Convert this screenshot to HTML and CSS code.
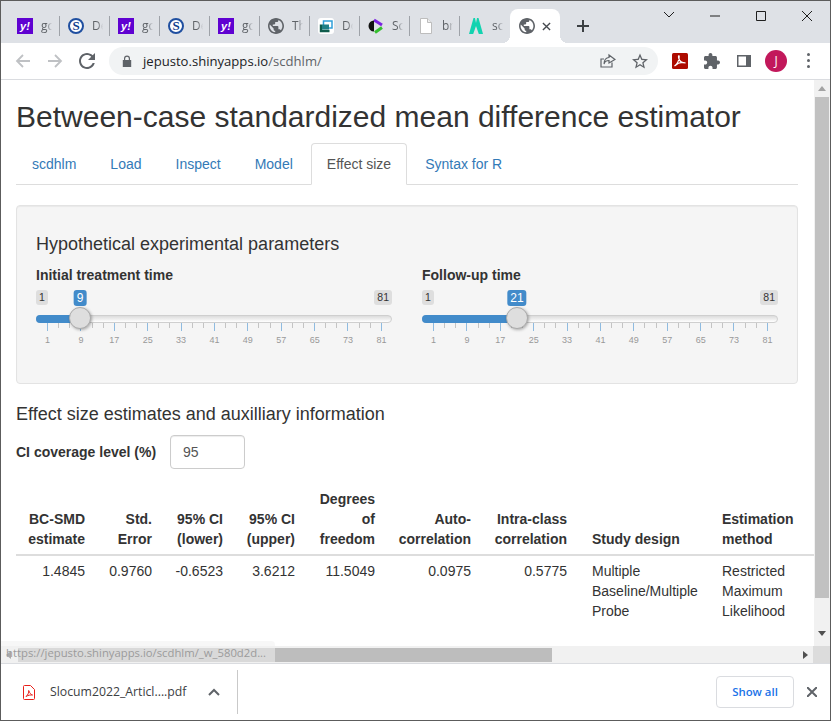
FILE: index.html
```html
<!DOCTYPE html>
<html lang="en">
<head>
<meta charset="utf-8">
<title>scdhlm</title>
<link rel="stylesheet" href="styles.css">
</head>
<body>
<svg class="defs" width="0" height="0" aria-hidden="true">
  <symbol id="globe" viewBox="2 2 20 20"><path d="M12 2C6.48 2 2 6.48 2 12s4.48 10 10 10 10-4.48 10-10S17.52 2 12 2zm-1 17.93c-3.95-.49-7-3.85-7-7.93 0-.62.08-1.21.21-1.79L9 15v1c0 1.1.9 2 2 2v1.93zm6.9-2.54c-.26-.81-1-1.39-1.9-1.39h-1v-3c0-.55-.45-1-1-1H8v-2h2c.55 0 1-.45 1-1V7h2c1.1 0 2-.9 2-2v-.41c2.93 1.19 5 4.06 5 7.41 0 2.08-.8 3.97-2.1 5.39z"/></symbol>
</svg>
<div class="window">
  <header class="strip">
    <div class="tab first"><span class="fav yahoo">y!</span><span class="title">gc</span></div>
    <div class="tab"><span class="fav sch">S</span><span class="title">De</span></div>
    <div class="tab"><span class="fav yahoo">y!</span><span class="title">gc</span></div>
    <div class="tab"><span class="fav sch">S</span><span class="title">De</span></div>
    <div class="tab"><span class="fav yahoo">y!</span><span class="title">gc</span></div>
    <div class="tab"><svg class="fav globe"><use href="#globe"/></svg><span class="title">Th</span></div>
    <div class="tab"><svg class="fav" viewBox="0 0 16 16"><rect width="16" height="16" rx="3" fill="#fff"/><rect x="5.500" y="3" width="8.500" height="7" fill="none" stroke="#2f9ed8" stroke-width="1.500"/><path d="M3 6.500V13h8.500" fill="none" stroke="#0f5c4c" stroke-width="2.400"/><path d="M4 11.500h7V6.500H4z" fill="#1f7f86"/></svg><span class="title">Do</span></div>
    <div class="tab"><svg class="fav" viewBox="0 0 16 16"><path d="M6 2 14 7" fill="none" stroke="#7a22e0" stroke-width="3"/><path d="M14 9.500 7 14.500" fill="none" stroke="#35c02f" stroke-width="3"/><path d="M6 2.500a5.500 5.500 0 0 0 0 11z" fill="#111"/></svg><span class="title">Sc</span></div>
    <div class="tab"><svg class="fav" viewBox="0 0 16 16"><path d="M2.500 .5h7l4 4v11h-11z" fill="#fff" stroke="#bdbdbd"/><path d="M9.500 .5v4h4" fill="#eee" stroke="#bdbdbd"/></svg><span class="title">br</span></div>
    <div class="tab last"><svg class="fav" viewBox="0 0 16 16"><path d="M5.500 0h1.500l1 5 1-5h1.500L15 16h-4.200L8 8 5.200 16H1z" fill="#12d3b0"/></svg><span class="title">sc</span></div>
    <div class="tab active"><svg class="fav globe"><use href="#globe"/></svg><svg class="tab-x" viewBox="0 0 10 10"><path d="M1 1l8 8M9 1l-8 8"/></svg></div>
    <svg class="plus" viewBox="0 0 12 12"><path d="M6 0v12M0 6h12"/></svg>
    <div class="winctl">
      <svg class="wc" viewBox="0 0 46 30"><path d="M18 11l5 5 5-5"/></svg>
      <svg class="wc" viewBox="0 0 46 30"><path d="M18 15h10"/></svg>
      <svg class="wc" viewBox="0 0 46 30"><path d="M18.500 10.500h9v9h-9z"/></svg>
      <svg class="wc" viewBox="0 0 46 30"><path d="M18 10l10 10M28 10L18 20"/></svg>
    </div>
  </header>

  <nav class="toolbar">
    <span class="tbtn"><svg class="ico line off" viewBox="0 0 16 16"><path d="M15 8H2M8 2 2 8l6 6"/></svg></span>
    <span class="tbtn"><svg class="ico line off" viewBox="0 0 16 16"><path d="M1 8h13M8 2l6 6-6 6"/></svg></span>
    <span class="tbtn"><svg class="ico solid" viewBox="4 4 16 16"><path d="M17.650 6.350C16.200 4.900 14.210 4 12 4c-4.420 0-7.990 3.580-7.990 8s3.570 8 7.990 8c3.730 0 6.840-2.550 7.730-6h-2.080c-.82 2.330-3.040 4-5.650 4-3.310 0-6-2.690-6-6s2.690-6 6-6c1.660 0 3.140.69 4.220 1.780L13 11h7V4l-2.350 2.350z"/></svg></span>
    <div class="omni">
      <svg class="lock" viewBox="0 0 10 12"><path d="M2 5V3.500a3 3 0 0 1 6 0V5h1.200v7H.8V5zm1.200 0h3.600V3.500a1.800 1.800 0 0 0-3.600 0z"/></svg>
      <span class="url"><span class="host">jepusto.shinyapps.io</span>/scdhlm/</span>
      <svg class="ico line share" viewBox="0 0 16 16"><path d="M12 9.500V14H1V6h3M9 2l6 4.500L9 10V7.500C6 7.500 4.500 9 4 11c0-4 2-6.500 5-6.500z"/></svg>
      <svg class="ico solid star" viewBox="2 2 20 19"><path d="M22 9.240l-7.190-.62L12 2 9.190 8.630 2 9.240l5.460 4.730L5.820 21 12 17.270 18.180 21l-1.630-7.030L22 9.240zM12 15.400l-3.760 2.270 1-4.280-3.320-2.880 4.380-.38L12 6.100l1.710 4.040 4.380.38-3.320 2.880 1 4.280L12 15.400z"/></svg>
    </div>
    <span class="tbtn"><svg class="acro" viewBox="0 0 16 16"><rect width="16" height="16" rx="1.500" fill="#ad0b00"/><path d="M2.500 13C5 11.500 7.500 7 7.200 3c-.7-.5-1 .5-.4 2.500C7.500 8 9.500 10 13.500 10c-3-1.200-7-.5-11 3z" fill="none" stroke="#fff" stroke-width="1.200"/></svg></span>
    <span class="tbtn"><svg class="ico solid" viewBox="2 1 21 21"><path d="M20.500 11H19V7c0-1.100-.9-2-2-2h-4V3.500C13 2.120 11.880 1 10.500 1S8 2.120 8 3.500V5H4c-1.100 0-1.990.9-1.990 2v3.800H3.500c1.490 0 2.700 1.210 2.700 2.700s-1.210 2.700-2.700 2.700H2V20c0 1.100.9 2 2 2h3.800v-1.500c0-1.490 1.210-2.700 2.700-2.700 1.490 0 2.700 1.210 2.700 2.700V22H17c1.100 0 2-.9 2-2v-4h1.500c1.380 0 2.500-1.120 2.500-2.500S21.880 11 20.500 11z"/></svg></span>
    <span class="tbtn"><svg class="panel" viewBox="0 0 14 12"><path d="M0 0h14v12H0zM1.500 1.500v9H9v-9z" fill-rule="evenodd"/></svg></span>
    <span class="tbtn"><span class="avatar">J</span></span>
    <span class="tbtn"><span class="dots"><i></i><i></i><i></i></span></span>
  </nav>

  <div class="view">
    <div class="view-row">
      <main class="page">
        <h1>Between-case standardized mean difference estimator</h1>
        <ul class="nav-tabs">
          <li><a>scdhlm</a></li>
          <li><a>Load</a></li>
          <li><a>Inspect</a></li>
          <li><a>Model</a></li>
          <li class="on"><a>Effect size</a></li>
          <li><a>Syntax for R</a></li>
        </ul>
        <section class="well">
          <h4>Hypothetical experimental parameters</h4>
          <div class="sliders">
            <div class="slider-col">
              <label class="lbl">Initial treatment time</label>
              <div class="irs">
                <div class="bubbles"><span class="minmax">1</span><span class="from" style="left:44px">9</span><span class="minmax">81</span></div>
                <div class="bar"><div class="bar-fill" style="width:44px"></div><span class="handle" style="left:43px"></span></div>
                <div class="ticks"><i class="maj"></i><i></i><i></i><i class="maj"></i><i></i><i></i><i class="maj"></i><i></i><i></i><i class="maj"></i><i></i><i></i><i class="maj"></i><i></i><i></i><i class="maj"></i><i></i><i></i><i class="maj"></i><i></i><i></i><i class="maj"></i><i></i><i></i><i class="maj"></i><i></i><i></i><i class="maj"></i><i></i><i></i><i class="maj"></i></div>
                <div class="grid"><b>1</b><b>9</b><b>17</b><b>25</b><b>33</b><b>41</b><b>49</b><b>57</b><b>65</b><b>73</b><b>81</b></div>
              </div>
            </div>
            <div class="slider-col">
              <label class="lbl">Follow-up time</label>
              <div class="irs">
                <div class="bubbles"><span class="minmax">1</span><span class="from" style="left:95px">21</span><span class="minmax">81</span></div>
                <div class="bar"><div class="bar-fill" style="width:90px"></div><span class="handle" style="left:94px"></span></div>
                <div class="ticks"><i class="maj"></i><i></i><i></i><i class="maj"></i><i></i><i></i><i class="maj"></i><i></i><i></i><i class="maj"></i><i></i><i></i><i class="maj"></i><i></i><i></i><i class="maj"></i><i></i><i></i><i class="maj"></i><i></i><i></i><i class="maj"></i><i></i><i></i><i class="maj"></i><i></i><i></i><i class="maj"></i><i></i><i></i><i class="maj"></i></div>
                <div class="grid"><b>1</b><b>9</b><b>17</b><b>25</b><b>33</b><b>41</b><b>49</b><b>57</b><b>65</b><b>73</b><b>81</b></div>
              </div>
            </div>
          </div>
        </section>
        <h4 class="sub">Effect size estimates and auxilliary information</h4>
        <div class="ci"><label class="lbl">CI coverage level (%)</label><span class="input">95</span></div>
        <table class="res">
          <colgroup><col class="c1"><col class="c2"><col class="c3"><col class="c4"><col class="c5"><col class="c6"><col class="c7"><col class="c8"><col class="c9"></colgroup>
          <thead>
            <tr><th>BC-SMD estimate</th><th>Std. Error</th><th>95% CI (lower)</th><th>95% CI (upper)</th><th>Degrees of freedom</th><th>Auto-correlation</th><th>Intra-class correlation</th><th class="l study">Study design</th><th class="l">Estimation method</th></tr>
          </thead>
          <tbody>
            <tr><td>1.4845</td><td>0.9760</td><td>-0.6523</td><td>3.6212</td><td>11.5049</td><td>0.0975</td><td>0.5775</td><td class="l study">Multiple Baseline/Multiple Probe</td><td class="l">Restricted Maximum Likelihood</td></tr>
          </tbody>
        </table>
      </main>
      <aside class="vscroll"><i class="up"></i><div class="vthumb"></div><i class="down"></i></aside>
    </div>
    <div class="hscroll"><i class="left"></i><div class="htrack"><div class="hthumb"></div></div><i class="right"></i><span class="corner"></span></div>
    <div class="status">https://jepusto.shinyapps.io/scdhlm/_w_580d2d...</div>
  </div>

  <footer class="dl">
    <div class="dl-item">
      <svg class="pdf" viewBox="0 0 12 15"><path d="M1.500.5h6l4 4v9a1 1 0 0 1-1 1h-9a1 1 0 0 1-1-1v-12a1 1 0 0 1 1-1z" fill="#fff" stroke="#e8201a"/><path d="M3 11.500C5 10 6 7.500 5.700 5.500c1 3 2.500 4 3.800 4.500-2-.2-4.500.2-6.500 1.500z" fill="none" stroke="#e8201a"/></svg>
      <span class="fname">Slocum2022_Articl....pdf</span>
      <svg class="chev" viewBox="0 0 12 8"><path d="M1 7l5-5 5 5"/></svg>
    </div>
    <button class="showall">Show all</button>
    <svg class="dl-x" viewBox="0 0 10 10"><path d="M0 0l10 10M10 0L0 10"/></svg>
  </footer>
</div>
</body>
</html>
```
FILE: styles.css
```css
* { box-sizing: border-box; }
html, body { margin: 0; padding: 0; }
body { width: 831px; height: 721px; overflow: hidden; font-family: "Liberation Sans", Arial, sans-serif; font-size: 14px; line-height: 20px; color: #333; background: #fff; }
.defs { position: absolute; }
.window { width: 831px; height: 721px; border: 1px solid #5c5c5c; display: flex; flex-direction: column; overflow: hidden; }

/* tab strip */
.strip { height: 42px; flex: none; background: #dee1e6; display: flex; align-items: flex-end; padding-left: 9px; }
.tab { width: 50px; height: 34px; display: flex; align-items: center; padding-left: 8px; position: relative; flex: none; }
.tab.first { padding-left: 7px; }
.tab::after { content: ""; position: absolute; right: 0; top: 7px; width: 1px; height: 20px; background: #9ea2a8; }
.tab.last::after { display: none; }
.tab.active { background: #fff; border-radius: 8px 8px 0 0; padding-left: 9px; }
.tab.active::before, .tab.active::after { content: ""; position: absolute; bottom: 0; top: auto; width: 8px; height: 8px; }
.tab.active::before { left: -8px; background: radial-gradient(circle at 0 0, transparent 8px, #fff 8px); }
.tab.active::after { right: -8px; background: radial-gradient(circle at 100% 0, transparent 8px, #fff 8px); }
.fav { width: 16px; height: 16px; flex: none; display: block; }
.globe { fill: #5f6368; }
.yahoo { background: #5f01d1; color: #fff; font: italic 700 11px/16px "Liberation Sans", sans-serif; text-align: center; }
.sch { background: #fff; color: #0f3c8c; font: 700 13px/12px "Liberation Serif", serif; text-align: center; border: 2px solid #1f4fa0; border-radius: 50%; }
.title { margin-left: 8px; width: 11px; overflow: hidden; white-space: nowrap; font: 12px/16px "Open Sans", sans-serif; color: #5f6368; -webkit-mask-image: linear-gradient(90deg, #000 50%, transparent); mask-image: linear-gradient(90deg, #000 50%, transparent); }
.tab-x { width: 9px; height: 9px; margin-left: 7px; fill: none; stroke: #45494e; stroke-width: 1.500; }
.plus { width: 12px; height: 12px; margin: 0 0 11px 17px; flex: none; fill: none; stroke: #3c4043; stroke-width: 2; }
.winctl { margin-left: auto; align-self: flex-start; display: flex; }
.wc { width: 46px; height: 30px; flex: none; fill: none; stroke: #1f1f1f; stroke-width: 1; }

/* toolbar */
.toolbar { height: 37px; flex: none; background: #fff; border-bottom: 1px solid #dadce0; display: flex; align-items: center; padding-left: 6px; padding-bottom: 1px; }
.tbtn { width: 32px; height: 32px; flex: none; display: flex; align-items: center; justify-content: center; }
.ico { width: 16px; height: 16px; display: block; flex: none; }
.ico.line { fill: none; stroke: #5f6368; stroke-width: 1.200; }
.ico.line.off { stroke: #bfc1c4; stroke-width: 1.800; }
.ico.solid { fill: #5f6368; }
.omni { width: 549px; height: 28px; margin: 0 6px; flex: none; background: #f1f3f4; border-radius: 14px; display: flex; align-items: center; padding-left: 13px; }
.lock { width: 10px; height: 12px; fill: #5f6368; flex: none; }
.url { margin-left: 11px; font: 13.100px/20px "Open Sans", sans-serif; color: #5f6368; white-space: nowrap; }
.host { color: #202124; }
.share { margin-left: auto; }
.star { margin-left: 16px; margin-right: 10px; }
.acro { width: 16px; height: 16px; display: block; }
.panel { width: 14px; height: 12px; fill: #5f6368; display: block; }
.avatar { width: 22px; height: 22px; border-radius: 50%; background: #c2185b; color: #fff; font: 12px/22px "Open Sans", sans-serif; text-align: center; }
.dots { display: flex; flex-direction: column; gap: 3px; }
.dots i { width: 3px; height: 3px; border-radius: 50%; background: #5f6368; display: block; }

/* viewport */
.view { flex: none; height: 583px; position: relative; display: flex; flex-direction: column; }
.view-row { height: 566px; flex: none; display: flex; }
.page { width: 813px; flex: none; padding: 0 16px 0 15px; overflow: hidden; }
h1 { margin: 20px 0 10px; font-size: 30px; font-weight: 400; line-height: 33px; color: #333; white-space: nowrap; }
.nav-tabs { list-style: none; margin: 0 0 20px; padding: 0; display: flex; border-bottom: 1px solid #ddd; height: 42px; }
.nav-tabs li { margin-right: 2px; height: 42px; }
.nav-tabs a { display: block; padding: 10px 15px; line-height: 20px; border: 1px solid transparent; border-radius: 4px 4px 0 0; color: #337ab7; height: 42px; }
.nav-tabs .on a { color: #555; background: #fff; border-color: #ddd #ddd #fff; }
.well { height: 179px; background: #f5f5f5; border: 1px solid #e3e3e3; border-radius: 4px; box-shadow: inset 0 1px 1px rgba(0,0,0,.05); padding: 19px; }
h4 { margin: 9px 0 11px; font-size: 18px; font-weight: 400; line-height: 20px; color: #333; }
.sliders { display: flex; gap: 30px; }
.slider-col { width: 356px; flex: none; }
.lbl { display: block; font-weight: 700; line-height: 20px; }
.irs { margin-top: 5px; }
.bubbles { height: 25px; display: flex; justify-content: space-between; align-items: flex-start; position: relative; }
.minmax { background: #dedede; color: #333; font-size: 10.500px; line-height: 13px; padding: 1px 3px; border-radius: 3px; height: 15px; }
.from { position: absolute; top: 0; transform: translateX(-50%); background: #428bca; color: #fff; font-size: 12px; line-height: 14px; padding: 1px 3px; border-radius: 3px; height: 16px; }
.bar { height: 8px; position: relative; background: linear-gradient(#dcdcdc, #fff); border: 1px solid #cfcfcf; border-radius: 4px; }
.bar-fill { position: absolute; left: -1px; top: -1px; height: 8px; background: #428bca; border-radius: 4px 0 0 4px; }
.handle { position: absolute; top: -9px; width: 22px; height: 22px; margin-left: -11px; border-radius: 50%; background: #dedede; border: 1px solid #ababab; box-shadow: 1px 1px 3px rgba(0,0,0,.3); }
.ticks { display: flex; justify-content: space-between; padding: 0 10px 0 11px; height: 8px; }
.ticks i { width: 1px; height: 5px; background: #c4c4c4; display: block; }
.ticks i.maj { height: 8px; background: #8fbbe0; }
.grid { display: flex; justify-content: space-between; padding: 0 10px 0 11px; margin-top: 2px; }
.grid b { width: 1px; display: flex; justify-content: center; font-weight: 400; font-size: 9px; line-height: 14px; color: #999; }
h4.sub { margin: 20px 0 11px; }
.ci { display: flex; align-items: center; gap: 14px; height: 34px; }
.input { width: 75px; height: 34px; border: 1px solid #ccc; border-radius: 4px; padding: 6px 12px; color: #555; background: #fff; box-shadow: inset 0 1px 1px rgba(0,0,0,.075); }
.res { width: 798px; margin-top: 15px; border-collapse: collapse; table-layout: fixed; }
.c1 { width: 77px; } .c2 { width: 67px; } .c3 { width: 71px; } .c4 { width: 72px; } .c5 { width: 80px; } .c6 { width: 96px; } .c7 { width: 96px; } .c8 { width: 139px; } .c9 { width: 100px; }
.res th, .res td { padding: 5px 8px; text-align: right; vertical-align: bottom; }
.res th { font-weight: 700; border-bottom: 2px solid #ddd; }
.res td { vertical-align: top; }
.res .l { text-align: left; }
.res .study { padding-left: 17px; }

/* scrollbars */
.vscroll { width: 16px; flex: none; background: #f1f1f1; position: relative; display: flex; flex-direction: column; align-items: center; }
.vthumb { width: 14px; height: 501px; margin-top: 6px; background: #c1c1c1; }
.up { width: 0; height: 0; border: 4px solid transparent; border-top: 0; border-bottom: 5px solid #a3a3a3; margin-top: 6px; display: block; }
.down { width: 0; height: 0; border: 4px solid transparent; border-bottom: 0; border-top: 5px solid #505050; margin-top: 33px; display: block; }
.hscroll { height: 17px; flex: none; background: #f1f1f1; display: flex; align-items: center; }
.left { width: 0; height: 0; border: 4px solid transparent; border-left: 0; border-right: 5px solid #505050; margin-left: 5px; display: block; flex: none; }
.htrack { width: 785px; margin-left: 7px; flex: none; }
.hthumb { width: 534px; height: 14px; background: #bdbdbd; }
.right { width: 0; height: 0; border: 4px solid transparent; border-right: 0; border-left: 5px solid #505050; display: block; flex: none; }
.corner { width: 17px; height: 17px; background: #dcdcdc; margin-left: auto; flex: none; }
.status { position: absolute; left: 0; bottom: 0; width: 274px; height: 22px; background: rgba(240,240,240,.55); border-radius: 0 4px 0 0; padding: 3px 0 0 5px; font: 11.300px/18px "Open Sans", sans-serif; color: #9b9b9b; white-space: nowrap; overflow: hidden; }

/* download shelf */
.dl { flex: 1; background: #fff; display: flex; align-items: center; border-top: 1px solid #dadce0; }
.dl-item { width: 237px; height: 44px; flex: none; display: flex; align-items: center; border-right: 1px solid #c9c9c9; padding-left: 22px; }
.pdf { width: 12px; height: 15px; flex: none; }
.fname { margin-left: 15px; font: 12.250px/16px "Open Sans", sans-serif; color: #3c4043; white-space: nowrap; width: 145px; flex: none; }
.chev { width: 12px; height: 8px; margin-left: 13px; fill: none; stroke: #5f6368; stroke-width: 2; flex: none; }
.showall { margin-left: 478px; width: 78px; height: 32px; background: #fff; border: 1px solid #dadce0; border-radius: 4px; color: #1a73e8; font: 600 11.400px/16px "Open Sans", sans-serif; padding: 0; flex: none; }
.dl-x { width: 10px; height: 10px; margin-left: 13px; fill: none; stroke: #5f6368; stroke-width: 2; flex: none; }
```
